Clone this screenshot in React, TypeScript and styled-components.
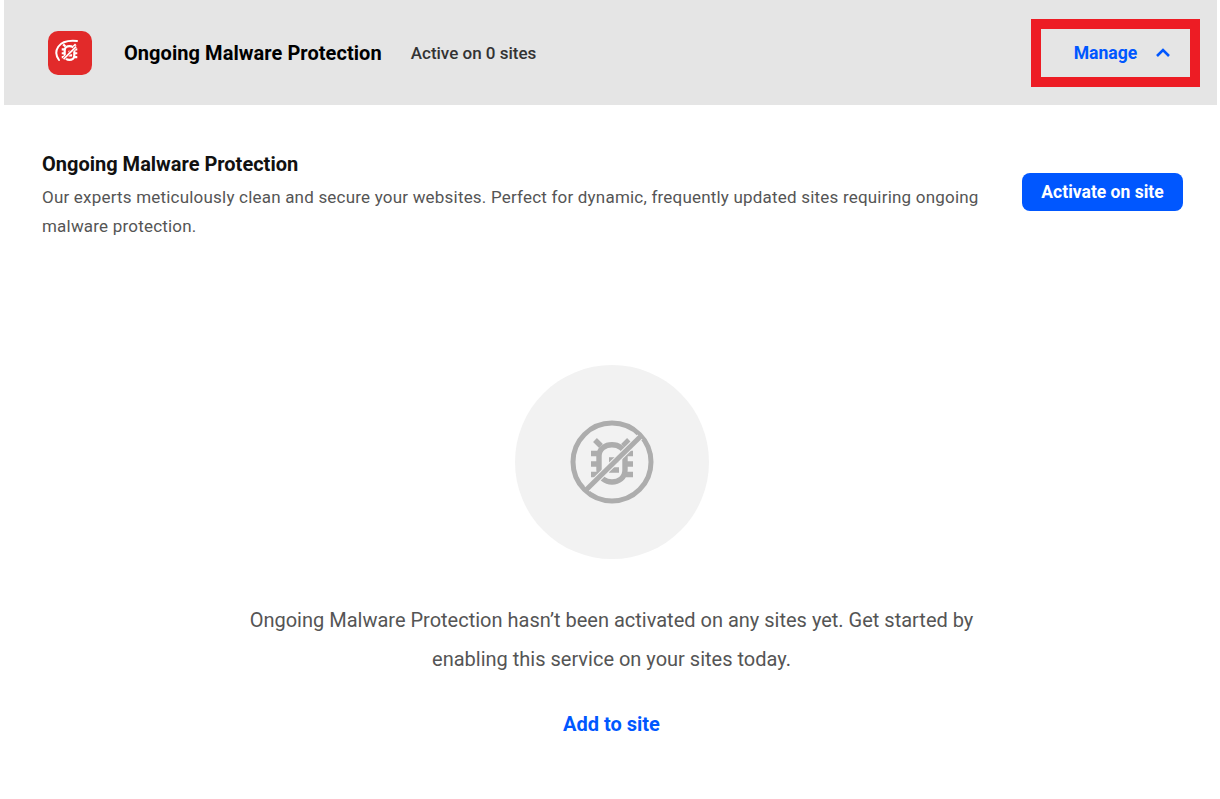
import React from 'react'
import styled, { createGlobalStyle } from 'styled-components'

const GlobalStyle = createGlobalStyle`
    html, body {
        margin: 0;
        padding: 0;
        background: #ffffff;
    }
    body {
        font-family: Roboto, "Liberation Sans", sans-serif;
    }
`;

const BugGlyph = () => (
    <>
        <path d="M-17 -22 L-11 -16 M17 -22 L11 -16" />
        <path d="M-13 -6 C-13 -21 13 -21 13 -6 V8 C13 24 -13 24 -13 8 Z" />
        <path d="M-21 -8.5 H-13 M-21 2 H-13 M-21 12.5 H-13 M21 -8.5 H13 M21 2 H13 M21 12.5 H13" />
        <path d="M-3 -2 H7 M-3 8 H7" />
    </>
)

const App = () => {
    return (
        <Page>
            <GlobalStyle />
            <Header>
                <Badge>
                    <svg width="44" height="44" viewBox="0 0 44 44" fill="none" stroke="#fff">
                        <path d="M11 29 C5 21 9 8 29 10" strokeWidth="2" strokeLinecap="round" />
                        <g transform="translate(21.5 21.5) scale(0.37)" strokeWidth="6">
                            <BugGlyph />
                            <path d="M18 -16 L-16 18" stroke="#e22a2a" strokeWidth="7.5" />
                            <path d="M18 -16 L-16 18" strokeWidth="4.5" />
                        </g>
                    </svg>
                </Badge>
                <HeaderTitle>Ongoing Malware Protection</HeaderTitle>
                <ActiveCount>Active on 0 sites</ActiveCount>
                <ManageButton>
                    Manage
                    <svg width="14" height="9" viewBox="0 0 14 9" fill="none" stroke="#0057ff" strokeWidth="2.6">
                        <path d="M1 8 L7 2 L13 8" />
                    </svg>
                </ManageButton>
            </Header>
            <Intro>
                <IntroText>
                    <IntroTitle>Ongoing Malware Protection</IntroTitle>
                    <IntroBody>
                        Our experts meticulously clean and secure your websites. Perfect for dynamic, frequently updated sites requiring ongoing malware protection.
                    </IntroBody>
                </IntroText>
                <ActivateButton>Activate on site</ActivateButton>
            </Intro>
            <Empty>
                <EmptyCircle>
                    <svg width="84" height="84" viewBox="-42 -42 84 84" fill="none" stroke="#adadad" strokeWidth="5">
                        <circle r="39" />
                        <g strokeWidth="5.4">
                            <BugGlyph />
                        </g>
                        <path d="M28 -25 L-25 27" stroke="#f2f2f2" strokeWidth="7" />
                        <path d="M29 -26 L-26 28" />
                    </svg>
                </EmptyCircle>
                <EmptyText>
                    Ongoing Malware Protection hasn’t been activated on any sites yet. Get started by enabling this service on your sites today.
                </EmptyText>
                <AddLink>Add to site</AddLink>
            </Empty>
        </Page>
    )
}

const Page = styled.div`
    width: 1220px;
    height: 799px;
    padding: 0 3px 0 4px;
    box-sizing: border-box;
    overflow: hidden;
`;

const Header = styled.header`
    display: flex;
    align-items: center;
    height: 105px;
    padding: 0 17px 0 44px;
    box-sizing: border-box;
    background: #e5e5e5;
`;

const Badge = styled.div`
    display: flex;
    width: 44px;
    height: 44px;
    border-radius: 10px;
    background: #e22a2a;
`;

const HeaderTitle = styled.h2`
    margin: 1px 0 0 32px;
    font-size: 20px;
    font-weight: 700;
    letter-spacing: 0.06px;
    color: #000000;
`;

const ActiveCount = styled.span`
    margin: 1px 0 0 29px;
    font-size: 17px;
    font-weight: 500;
    color: #333333;
`;

const ManageButton = styled.button`
    display: flex;
    align-items: center;
    justify-content: center;
    gap: 19px;
    width: 169px;
    height: 68px;
    margin-left: auto;
    padding: 0 0 0 13px;
    box-sizing: border-box;
    border: 10px solid #ed1c24;
    background: transparent;
    font-family: inherit;
    font-size: 17.6px;
    font-weight: 700;
    color: #0057ff;
`;

const Intro = styled.section`
    display: flex;
    align-items: flex-start;
    justify-content: space-between;
    padding: 49px 34px 0 38px;
`;

const IntroText = styled.div`
    width: 960px;
`;

const IntroTitle = styled.h3`
    margin: 0;
    font-size: 20px;
    line-height: 21px;
    font-weight: 700;
    color: #111111;
`;

const IntroBody = styled.p`
    margin: 8px 0 0;
    font-size: 17px;
    line-height: 29px;
    letter-spacing: 0.2px;
    color: #555555;
`;

const ActivateButton = styled.button`
    width: 161px;
    height: 38px;
    margin-top: 19px;
    padding: 0;
    border: 0;
    border-radius: 8px;
    background: #0057ff;
    font-family: inherit;
    font-size: 17.5px;
    font-weight: 700;
    color: #ffffff;
`;

const Empty = styled.section`
    display: flex;
    flex-direction: column;
    align-items: center;
    margin: 124px 0 0 2px;
`;

const EmptyCircle = styled.div`
    display: flex;
    align-items: center;
    justify-content: center;
    width: 194px;
    height: 194px;
    border-radius: 50%;
    background: #f2f2f2;
`;

const EmptyText = styled.p`
    width: 760px;
    margin: 42px 0 0;
    font-size: 20px;
    line-height: 39px;
    text-align: center;
    color: #555555;
`;

const AddLink = styled.a`
    margin-top: 35px;
    font-size: 20px;
    line-height: 21px;
    font-weight: 700;
    color: #0057ff;
`;

export default App
